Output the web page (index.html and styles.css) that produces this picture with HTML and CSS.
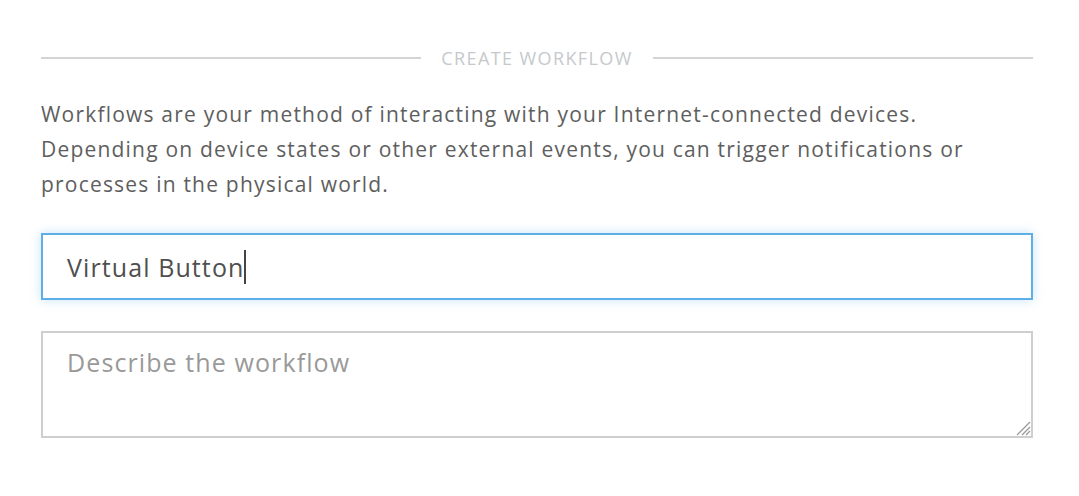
FILE: index.html
```html
<!DOCTYPE html>
<html>
<head>
<meta charset="utf-8">
<link rel="stylesheet" href="styles.css">
</head>
<body>
<div class="page">
  <div class="divider">
    <span class="rule"></span>
    <span class="divider-label">CREATE WORKFLOW</span>
    <span class="rule"></span>
  </div>
  <p class="intro">Workflows are your method of interacting with your Internet-connected devices. Depending on device states or other external events, you can trigger notifications or processes in the physical world.</p>
  <div class="field field-focus"><span class="value">Virtual Button</span><span class="caret"></span></div>
  <div class="field field-area">
    <span class="placeholder">Describe the workflow</span>
    <svg class="grip" width="18" height="18" viewBox="0 0 18 18">
      <line x1="17" y1="4" x2="4" y2="17" stroke="#9a9a9a" stroke-width="1.2"/>
      <line x1="17" y1="9" x2="9" y2="17" stroke="#9a9a9a" stroke-width="1.2"/>
      <line x1="17" y1="13" x2="13" y2="17" stroke="#9a9a9a" stroke-width="1.2"/>
    </svg>
  </div>
</div>
</body>
</html>
```
FILE: styles.css
```css
html, body {
  margin: 0;
  padding: 0;
  background: #ffffff;
}
body {
  font-family: "Open Sans", "Noto Sans", sans-serif;
}
.page {
  width: 992px;
  margin-left: 41px;
  padding-top: 46px;
}
.divider {
  display: flex;
  align-items: center;
  gap: 20px;
  height: 24px;
}
.rule {
  flex: 1;
  height: 2px;
  background: #d4d4d4;
}
.divider-label {
  font-size: 18px;
  color: #c5c9cc;
  letter-spacing: 1.4px;
}
.intro {
  max-width: 972px;
  margin: 27px 0 0 0;
  font-size: 21px;
  letter-spacing: 1.2px;
  line-height: 35px;
  color: #5e5e5e;
}
.field {
  position: relative;
  box-sizing: border-box;
  background: #fff;
  padding: 0 24px;
}
.field-focus {
  margin-top: 31px;
  height: 67px;
  border: 2px solid #5eaee8;
  box-shadow: 0 0 10px rgba(94, 174, 232, 0.35);
  display: flex;
  align-items: center;
}
.value {
  font-size: 25px;
  letter-spacing: 1.1px;
  color: #4f4f4f;
}
.caret {
  display: inline-block;
  width: 2px;
  height: 34px;
  background: #444;
  margin-left: 0;
}
.field-area {
  margin-top: 31px;
  height: 107px;
  border: 2px solid #cfcfcf;
  padding-top: 12px;
}
.placeholder {
  font-size: 25px;
  letter-spacing: 1.1px;
  color: #999999;
}
.grip {
  position: absolute;
  right: 0;
  bottom: 0;
}
```
